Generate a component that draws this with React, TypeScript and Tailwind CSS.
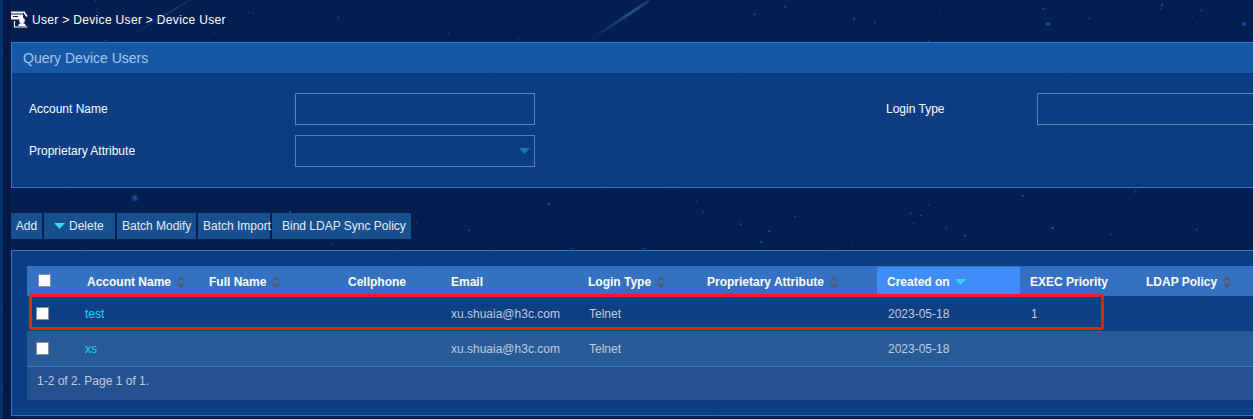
import React from "react";

const font = { fontFamily: '"Liberation Sans", Arial, sans-serif' };

function Sort() {
  return (
    <svg width="8" height="12" viewBox="0 0 8 12" className="ml-[6px] shrink-0" fill="none" stroke="#545a62" strokeWidth="2">
      <path d="M.7 4.600L4 1.300l3.300 3.300" />
      <path d="M.7 7.400L4 10.700l3.300-3.300" />
    </svg>
  );
}

function Tri({ color = "#3fd0f5" }: { color?: string }) {
  return (
    <svg width="11" height="6" viewBox="0 0 11 6" className="shrink-0">
      <path d="M0 0h11L5.500 6z" fill={color} />
    </svg>
  );
}

function Box({ className = "" }: { className?: string }) {
  return <span className={"block w-[13px] h-[13px] bg-white border border-[#8c8c8c] " + className} />;
}

function Stars() {
  const stars: { x: number; y: number; r: number; o: number }[] = [];
  let s = 7;
  const rnd = () => {
    s = (s * 16807) % 2147483647;
    return s / 2147483647;
  };
  for (let i = 0; i < 300; i++) {
    stars.push({ x: rnd() * 1253, y: rnd() * 419, r: 0.5 + rnd() * 0.7, o: 0.25 + rnd() * 0.6 });
  }
  return (
    <svg className="absolute inset-0 w-full h-full" viewBox="0 0 1253 419" aria-hidden="true">
      <defs>
        <linearGradient id="streak" x1="0" y1="1" x2="1" y2="0">
          <stop offset="0" stopColor="#2d6fc0" stopOpacity="0" />
          <stop offset="0.7" stopColor="#4c8fdc" stopOpacity="0.45" />
          <stop offset="1" stopColor="#7db4f0" stopOpacity="0.1" />
        </linearGradient>
      </defs>
      <rect x="0" y="0" width="3" height="419" fill="#04336f" />
      <rect x="3" y="0" width="8" height="419" fill="#011a45" />
      <path d="M120 42L190 0" stroke="url(#streak)" strokeWidth="1" fill="none" />
      <path d="M590 40L650 0" stroke="url(#streak)" strokeWidth="3" fill="none" />
      {stars.map((t, i) => (
        <circle key={i} cx={t.x} cy={t.y} r={t.r} fill="#1c6cc8" opacity={t.o} />
      ))}
      <circle cx="135" cy="198" r="3.500" fill="#1c6cc8" opacity="0.35" />
      <circle cx="135" cy="198" r="1.500" fill="#1c6cc8" opacity="0.6" />
      <circle cx="1048" cy="24" r="2" fill="#1c6cc8" opacity="0.6" />
      <circle cx="1244" cy="24" r="2" fill="#1c6cc8" opacity="0.6" />
    </svg>
  );
}

const grid = "grid grid-cols-[50px_122px_139px_103px_137px_119px_180px_143px_116px_1fr]";

function Th({ children, sort }: { children: React.ReactNode; sort?: boolean }) {
  return (
    <div className="flex items-center pl-[10px] pt-[1px] text-white font-bold whitespace-nowrap">
      {children}
      {sort && <Sort />}
    </div>
  );
}

function Row({ name, prio, className }: { name: string; prio?: string; className: string }) {
  const cell = "flex items-center text-[#c3ccd8] whitespace-nowrap";
  return (
    <div className={grid + " " + className}>
      <div className="flex items-center pl-[9px]"><Box /></div>
      <div className="flex items-center pl-[8px] text-[#16d8f5]">{name}</div>
      <div />
      <div />
      <div className={cell + " pl-[10px]"}>xu.shuaia@h3c.com</div>
      <div className={cell + " pl-[11px]"}>Telnet</div>
      <div />
      <div className={cell + " pl-[11px]"}>2023-05-18</div>
      <div className={cell + " pl-[11px]"}>{prio}</div>
      <div />
    </div>
  );
}

export default function App() {
  return (
    <div className="relative w-[1253px] h-[419px] overflow-hidden bg-[#021f50] text-[12px]" style={font}>
      <Stars />
      <div className="relative pl-[11px] w-[1300px]">
        <div className="h-[42px] flex items-center text-white pb-[3px]">
          <svg width="17" height="17" viewBox="0 0 17 17" className="mr-[4px] shrink-0">
            <path d="M0 0.500h12v8H0z" fill="#fff" />
            <path d="M0 3h12M2 5.500h5" stroke="#02204f" strokeWidth="1.200" />
            <path d="M12.500 .5l3.500 5" stroke="#fff" strokeWidth="1.600" />
            <circle cx="11" cy="9.500" r="2.800" fill="#fff" />
            <path d="M7 15c.3-2 2-3 4-3s3.700 1 4 3z" fill="#fff" />
            <path d="M3.500 10v6h13" stroke="#fff" strokeWidth="1.200" fill="none" />
          </svg>
          <span className="tracking-[0.325px]">User &gt; Device User &gt; Device User</span>
        </div>

        <section className="h-[146px] border border-[#2f75cf] border-r-0 bg-[#0d3f85]/95">
          <div className="h-[30px] bg-[#1558a6] flex items-center pl-[11px] text-[14px] text-[#a8c8ea]">Query Device Users</div>
          <div className="pt-[20px] pl-[17px] flex flex-col gap-[10px]">
            <div className="flex items-center h-[32px]">
              <span className="w-[266px] text-white">Account Name</span>
              <div className="w-[240px] h-[32px] border border-[#4b87cd]" />
              <span className="ml-[351px] w-[151px] text-white">Login Type</span>
              <div className="w-[240px] h-[32px] border border-[#5d83b5]" />
            </div>
            <div className="flex items-center h-[32px]">
              <span className="w-[266px] text-white">Proprietary Attribute</span>
              <div className="w-[240px] h-[32px] border border-[#5c7fb0] flex items-center justify-end pr-[4px]">
                <Tri color="#0e7fa6" />
              </div>
            </div>
          </div>
        </section>

        <div className="mt-[25px] flex gap-[2px] text-[#e6edf5]">
          <button className="h-[26px] w-[31px] bg-[#17508f] flex items-center justify-center">Add</button>
          <button className="h-[26px] w-[71px] bg-[#17508f] flex items-center pl-[10px] gap-[4px]"><Tri />Delete</button>
          <button className="h-[26px] w-[79px] bg-[#17508f] flex items-center pl-[5px] whitespace-nowrap">Batch Modify</button>
          <button className="h-[26px] w-[72px] bg-[#17508f] flex items-center pl-[5px] whitespace-nowrap">Batch Import</button>
          <button className="h-[26px] w-[139px] bg-[#17508f] flex items-center pl-[10px] whitespace-nowrap">Bind LDAP Sync Policy</button>
        </div>

        <section className="relative mt-[11px] h-[166px] border border-[#2f75cf] border-r-0 bg-[#0d3f85]/95 pl-[15px] pt-[15px]">
          <div className={grid + " h-[30px] bg-[#3571c2]"}>
            <div className="flex items-start pl-[11px] pt-[8px]"><Box /></div>
            <Th sort>Account Name</Th>
            <Th sort>Full Name</Th>
            <Th>Cellphone</Th>
            <Th>Email</Th>
            <Th sort>Login Type</Th>
            <Th sort>Proprietary Attribute</Th>
            <div className="flex items-center gap-[5px] pl-[10px] mt-[1px] text-white font-bold bg-[#3f8dfa] whitespace-nowrap">Created on<Tri /></div>
            <Th>EXEC Priority</Th>
            <Th sort>LDAP Policy</Th>
          </div>
          <Row name="test" prio="1" className="h-[35px] bg-[#0d3f85]" />
          <Row name="xs" className="h-[36px] bg-[#265b98] border-b border-[#2f75cf]" />
          <div className="h-[33px] bg-[#245291] flex items-start pt-[5px] pl-[10px] text-[#c3ccd8]">1-2 of 2. Page 1 of 1.</div>
          <div className="absolute left-[17px] top-[43px] w-[1075px] h-[36px] border-[3px] border-[#f01c1c] rounded-[3px]" />
        </section>
      </div>
    </div>
  );
}
